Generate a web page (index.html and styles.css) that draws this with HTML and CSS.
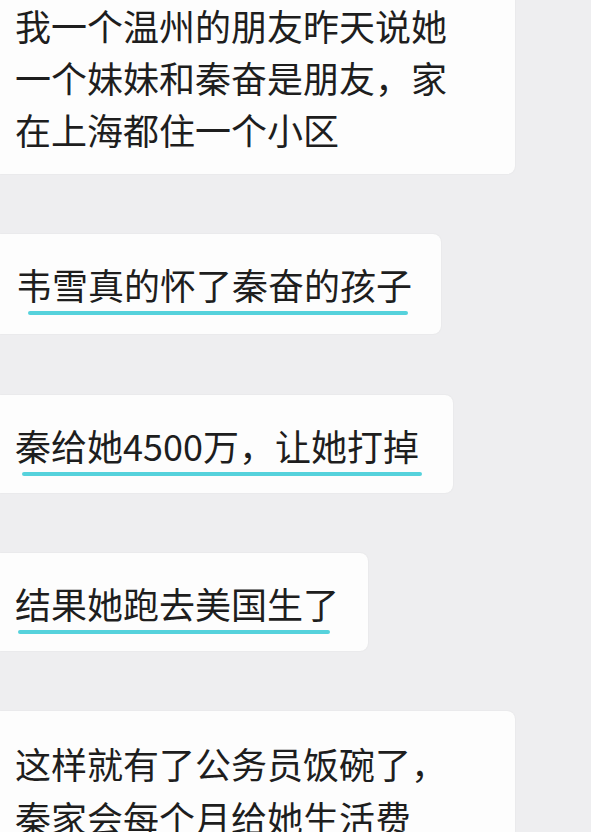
FILE: index.html
```html
<!DOCTYPE html>
<html lang="zh">
<head>
<meta charset="utf-8">
<link rel="stylesheet" href="styles.css">
</head>
<body>
<div class="chat">
  <div class="bubble b1">我一个温州的朋友昨天说她<br>一个妹妹和秦奋是朋友，家<br>在上海都住一个小区</div>
  <div class="bubble b2"><span class="mark m2">韦雪真的怀了秦奋的孩子</span></div>
  <div class="bubble b3"><span class="mark m3">秦给她4500万，让她打掉</span></div>
  <div class="bubble b4"><span class="mark m4">结果她跑去美国生了</span></div>
  <div class="bubble b5">这样就有了公务员饭碗了，<br>秦家会每个月给她生活费</div>
</div>
</body>
</html>
```
FILE: styles.css
```css
html, body {
  margin: 0;
  padding: 0;
  background: #eeeef0;
  height: 100%;
  overflow: hidden;
}
.chat {
  display: flex;
  flex-direction: column;
  align-items: flex-start;
  gap: 60px;
  font-family: "Noto Sans CJK SC", "Noto Sans", sans-serif;
  font-size: 36px;
  line-height: 52px;
  color: #1e1e1e;
}
.bubble {
  background: #fdfdfd;
  border-radius: 0 8px 8px 0;
  box-shadow: 0 0 2px rgba(0, 0, 0, 0.07);
  padding: 24px 32px 23px 15px;
  white-space: nowrap;
}
.b1 {
  width: 468px;
  margin-top: -3px;
  padding-top: 2px;
  padding-bottom: 19px;
  border-radius: 0 0 8px 0;
}
.b2 { padding-left: 16px; padding-right: 29px; padding-bottom: 24px; }
.b3 { padding-right: 34px; margin-top: 1px; padding-bottom: 22px; }
.b4 { padding-right: 29px; padding-bottom: 22px; }
.b5 {
  width: 468px;
  padding-top: 25px;
  line-height: 54px;
  border-radius: 0 8px 0 0;
}
.mark {
  position: relative;
  display: inline-block;
}
.mark::after {
  content: "";
  position: absolute;
  bottom: -5px;
  height: 4px;
  border-radius: 2px;
  background: #56d2dc;
}
.m2::after { left: 12px; right: 4px; }
.m3::after { left: 7px; right: -3px; }
.m4::after { left: 3px; right: 9px; }
```
